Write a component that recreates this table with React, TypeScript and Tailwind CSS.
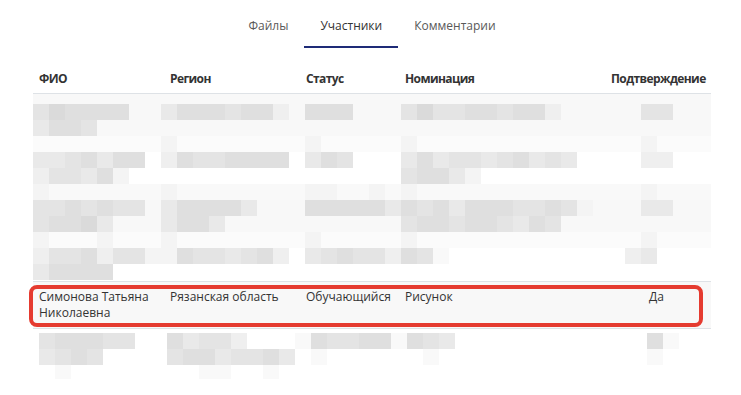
import React from "react";

interface Band {
  h: string;
  bg: string;
  cells: string;
}

const SHADES: Record<string, string> = {
  a: "bg-[#dadada]",
  b: "bg-[#dfdfdf]",
  c: "bg-[#e4e4e4]",
  d: "bg-[#e9e9e9]",
  e: "bg-[#efefef]",
  f: "bg-[#f4f4f4]",
  g: "bg-[#f9f9f9]",
};

const TOP_BANDS: Band[] = [
  { h: "h-[10px]", bg: "bg-[#f8f8f8]", cells: "" },
  { h: "h-4", bg: "bg-[#f8f8f8]", cells: "cabbbb..dbbbcbbe.bbb...caccbbcbbe.....cc" },
  { h: "h-4", bg: "bg-[#f8f8f8]", cells: "dbbc" },
  { h: "h-4", bg: "bg-[#fbfbfb]", cells: "........f........f.....f..............f" },
  { h: "h-4", bg: "bg-white", cells: "ddcbdbb.ebccbbbb.dbc...dbdccdcbdcd....ee" },
  { h: "h-4", bg: "bg-white", cells: "eccdbf.................cbbdf" },
  { h: "h-4", bg: "bg-[#f9f9f9]", cells: "f.......f........ff..f.f..............f" },
  { h: "h-4", bg: "bg-[#f8f8f8]", cells: "ccbcbcc.dbbbbd...bbbbbdbcbdbbbccbcf...dd" },
  { h: "h-4", bg: "bg-[#f8f8f8]", cells: "cbbad...dbbd...........cbbcbbcdbc" },
  { h: "h-4", bg: "bg-[#fbfbfb]", cells: "f...f...f........f.....f..............f" },
  { h: "h-4", bg: "bg-white", cells: "eccbeccffbccdcbe.dcbccebcg...........ed" },
  { h: "h-4", bg: "bg-white", cells: "dbbbb" },
  { h: "h-px", bg: "bg-white", cells: "" },
];

const BOTTOM_BANDS: Band[] = [
  { h: "h-1", bg: "bg-white", cells: "" },
  { h: "h-4", bg: "bg-white", cells: "cbbbcc..bdcce...gbccbbgbcd............bg" },
  { h: "h-4", bg: "bg-white", cells: "dcbc....cbbdccbd.g......g.............g" },
  { h: "h-[14px]", bg: "bg-white", cells: ".g........gg..g" },
];

function Mosaic({ bands, offset }: { bands: Band[]; offset?: boolean }) {
  return (
    <div className={`flex flex-col ${offset ? "pl-[6px]" : ""}`}>
      {bands.map((band, i) => (
        <div key={i} className={`flex overflow-hidden ${band.h} ${band.bg}`}>
          {Array.from({ length: 43 }).map((_, j) => {
            const shade = SHADES[band.cells[j] ?? "."] ?? "";
            return <div key={j} className={`w-4 h-full shrink-0 ${shade}`} />;
          })}
        </div>
      ))}
    </div>
  );
}

const TABS = ["Файлы", "Участники", "Комментарии"];

export default function App() {
  const active = "Участники";

  return (
    <div
      className="w-[741px] h-[395px] bg-white text-[12px] leading-4 text-[#333] overflow-hidden"
      style={{ fontFamily: '"Open Sans", "Noto Sans", sans-serif' }}
    >
      <div className="ml-[33px] w-[678px]">
        {/* tab strip */}
        <nav className="flex justify-center pt-[18px]">
          {TABS.map((tab) => (
            <button
              key={tab}
              className={`px-4 pb-3 border-b-2 ${
                tab === active
                  ? "border-[#1e2b77] text-[#333]"
                  : "border-transparent text-[#595959]"
              }`}
            >
              {tab}
            </button>
          ))}
        </nav>

        <table className="mt-[17px] w-full table-fixed border-collapse">
          <colgroup>
            <col className="w-[132px]" />
            <col className="w-[136px]" />
            <col className="w-[99px]" />
            <col className="w-[205px]" />
            <col className="w-[106px]" />
          </colgroup>
          <thead>
            <tr className="border-b border-[#dee2e6] font-bold tracking-[-0.6px] text-left">
              <th className="px-[6px] py-[6px]">ФИО</th>
              <th className="px-[5px] py-[6px]">Регион</th>
              <th className="px-[5px] py-[6px]">Статус</th>
              <th className="px-[5px] py-[6px]">Номинация</th>
              <th className="pl-[6px] pr-0 py-[6px] whitespace-nowrap">Подтверждение</th>
            </tr>
          </thead>
          <tbody>
            <tr>
              <td colSpan={5} className="p-0">
                <Mosaic bands={TOP_BANDS} />
              </td>
            </tr>
            <tr className="border-y border-[#dee2e6] bg-[#f8f8f8] align-top">
              <td className="relative px-[6px] py-[7px]">
                Симонова Татьяна Николаевна
                <div className="absolute left-[-4px] top-[3px] w-[674px] h-[42px] rounded-[8px] border-4 border-[#e53b30]" />
              </td>
              <td className="px-[5px] py-[7px]">Рязанская область</td>
              <td className="px-[5px] py-[7px] whitespace-nowrap">Обучающийся</td>
              <td className="px-[5px] py-[7px]">Рисунок</td>
              <td className="pl-[44px] pr-[5px] py-[7px]">Да</td>
            </tr>
            <tr>
              <td colSpan={5} className="p-0">
                <Mosaic bands={BOTTOM_BANDS} offset />
              </td>
            </tr>
          </tbody>
        </table>
      </div>
    </div>
  );
}
